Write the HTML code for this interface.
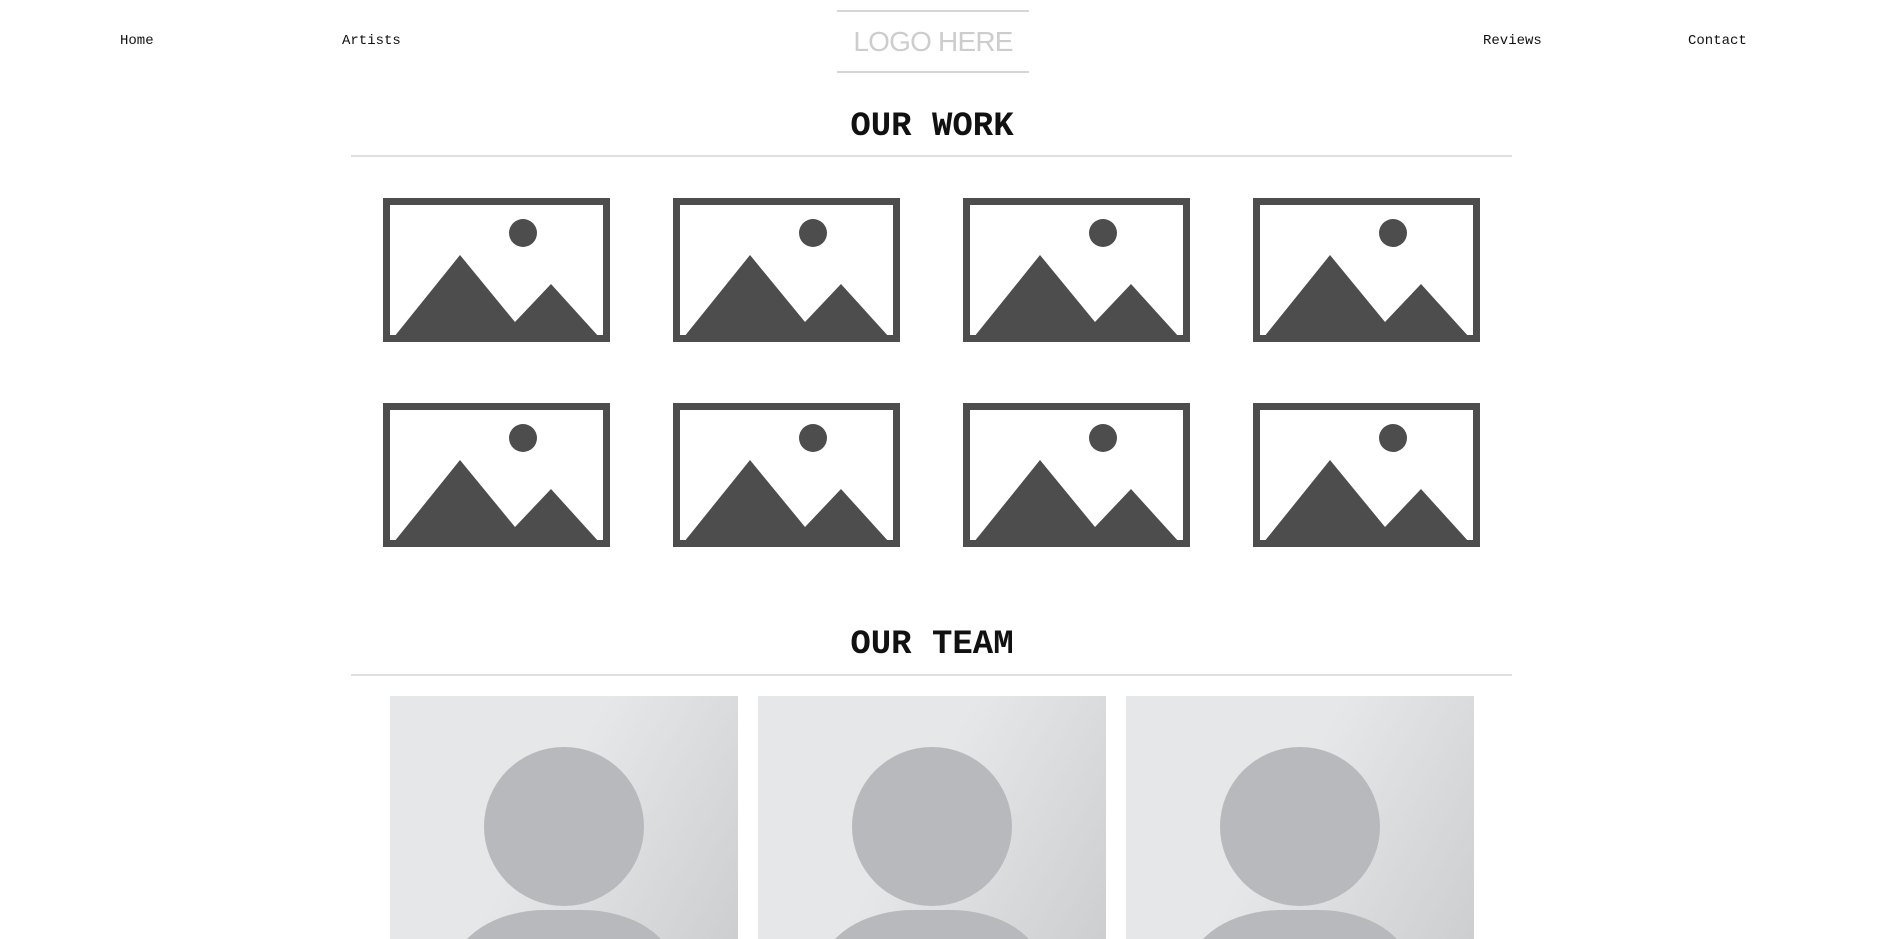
<!DOCTYPE html>
<html><head><meta charset="utf-8"><style>
html,body{margin:0;width:1880px;height:939px;overflow:hidden}
body{background:#fff;position:relative;font-family:"Liberation Mono",monospace}
.nav{position:absolute;top:33px;font-size:14px;color:#111}
.logo{position:absolute;left:837px;top:10px;width:192px;height:63px;border-top:2px solid #d6d6d6;border-bottom:2px solid #d6d6d6;box-sizing:border-box;text-align:center;font-family:"Liberation Sans",sans-serif;font-size:28px;letter-spacing:-0.8px;white-space:nowrap;color:#cdcdcd;line-height:60px;overflow:hidden}
h2{position:absolute;left:0;width:1864px;margin:0;text-align:center;font-size:34px;font-weight:bold;color:#111}
.line{position:absolute;left:351px;width:1161px;height:2px;background:#dde0e3}
.img{position:absolute;width:227px;height:144px}
.card{position:absolute;top:696px;width:348px;height:243px;background:linear-gradient(120deg,#e6e7e9 45%,#cdced0 100%);overflow:hidden}
.head{position:absolute;left:94px;top:51px;width:160px;height:159px;border-radius:50%;background:#b8b9bc}
.body{position:absolute;left:64px;top:214px;width:220px;height:120px;border-radius:50%/60%;background:#b8b9bc}
</style></head><body>
<div class="nav" style="left:120px">Home</div>
<div class="nav" style="left:342px">Artists</div>
<div class="nav" style="left:1483px">Reviews</div>
<div class="nav" style="left:1688px">Contact</div>
<div class="logo">LOGO HERE</div>
<h2 style="top:108px">OUR WORK</h2>
<div class="line" style="top:155px"></div>
<svg width="0" height="0" style="position:absolute"><defs><g id="im"><rect x="3.5" y="3.5" width="220" height="137" fill="none" stroke="#4d4d4d" stroke-width="7"/><circle cx="140" cy="35" r="14" fill="#4d4d4d"/><path d="M11 139 L77 57 L132 124 L168 86 L216 139 Z" fill="#4d4d4d"/></g></defs></svg>
<svg class="img" style="left:383px;top:198px"><use href="#im"/></svg>
<svg class="img" style="left:673px;top:198px"><use href="#im"/></svg>
<svg class="img" style="left:963px;top:198px"><use href="#im"/></svg>
<svg class="img" style="left:1253px;top:198px"><use href="#im"/></svg>
<svg class="img" style="left:383px;top:403px"><use href="#im"/></svg>
<svg class="img" style="left:673px;top:403px"><use href="#im"/></svg>
<svg class="img" style="left:963px;top:403px"><use href="#im"/></svg>
<svg class="img" style="left:1253px;top:403px"><use href="#im"/></svg>
<h2 style="top:626px">OUR TEAM</h2>
<div class="line" style="top:674px"></div>
<div class="card" style="left:390px"><div class="head"></div><div class="body"></div></div>
<div class="card" style="left:758px"><div class="head"></div><div class="body"></div></div>
<div class="card" style="left:1126px"><div class="head"></div><div class="body"></div></div>
</body></html>
